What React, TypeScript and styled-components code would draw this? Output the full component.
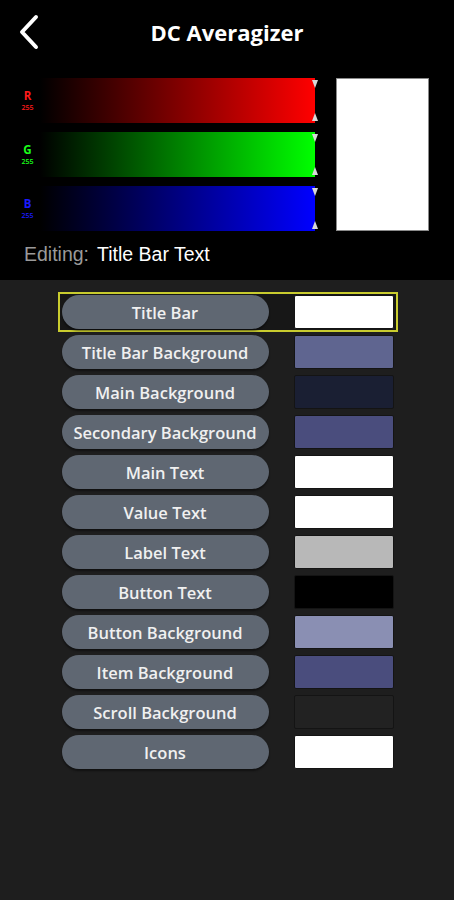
import React from 'react';
import styled, { createGlobalStyle } from 'styled-components';

const GlobalStyle = createGlobalStyle`
  html, body {
    margin: 0;
    padding: 0;
    background: #1e1e1e;
  }
  #root {
    min-height: 900px;
    background: #1e1e1e;
  }
`;

const Screen = styled.div`
  width: 454px;
  min-height: 900px;
  background: #1e1e1e;
  font-family: 'Open Sans', 'Noto Sans', sans-serif;
`;

const Header = styled.div`
  background: #000;
  padding-bottom: 14px;
`;

const TitleBar = styled.div`
  display: grid;
  grid-template-columns: 60px 1fr 60px;
  align-items: center;
  height: 64px;
`;

const BackButton = styled.button`
  display: flex;
  align-items: center;
  justify-content: center;
  width: 60px;
  height: 64px;
  padding: 0;
  border: none;
  background: none;
  cursor: pointer;
`;

const Title = styled.h1`
  margin: 0;
  text-align: center;
  color: #fff;
  font-size: 22px;
  font-weight: 700;
`;

const Editor = styled.div`
  display: flex;
  align-items: flex-start;
  padding: 14px 0 0 15px;
`;

const Sliders = styled.div`
  display: flex;
  flex-direction: column;
  gap: 9px;
`;

const SliderRow = styled.div`
  display: flex;
  align-items: center;
  height: 45px;
`;

const ChannelLabel = styled.div<{ $color: string }>`
  width: 25px;
  display: flex;
  flex-direction: column;
  align-items: center;
  color: ${p => p.$color};
  font-family: 'Open Sans', sans-serif;
`;

const ChannelLetter = styled.span`
  font-size: 11.5px;
  line-height: 15px;
  font-weight: 700;
`;

const ChannelValue = styled.span`
  font-size: 7px;
  line-height: 10px;
  font-weight: 600;
`;

const Track = styled.div<{ $color: string }>`
  position: relative;
  width: 275px;
  height: 45px;
  background: linear-gradient(to right, #000 0%, ${p => p.$color} 100%);
`;

const Thumb = styled.div<{ $down?: boolean }>`
  position: absolute;
  right: -3px;
  ${p => (p.$down ? 'top: 2px;' : 'bottom: 2px;')}
  width: 0;
  height: 0;
  border-left: 3px solid transparent;
  border-right: 3px solid transparent;
  ${p => (p.$down ? 'border-top: 8px solid #d8d8d8;' : 'border-bottom: 8px solid #d8d8d8;')}
`;

const Preview = styled.div<{ $color: string }>`
  margin-left: 21px;
  width: 91px;
  height: 151px;
  background: ${p => p.$color};
  border: 1px solid #8a8a8a;
`;

const EditingLine = styled.div`
  padding: 11px 0 0 24px;
  font-family: 'Liberation Sans', Arial, sans-serif;
  font-size: 19.5px;
  line-height: 24px;
  color: #9a9a9a;
`;

const EditingTarget = styled.span`
  color: #fff;
  margin-left: 8px;
`;

const List = styled.div`
  display: flex;
  flex-direction: column;
  align-items: center;
  padding: 12px 0 0 1px;
`;

const Row = styled.div<{ $selected?: boolean }>`
  display: flex;
  align-items: center;
  gap: 25px;
  width: 340px;
  box-sizing: border-box;
  padding: 1px 2px;
  border: 2px solid ${p => (p.$selected ? '#c9cc2e' : 'transparent')};
  background: ${p => (p.$selected ? '#171717' : 'transparent')};
`;

const Pill = styled.button`
  flex: none;
  width: 207px;
  height: 34px;
  border: none;
  border-radius: 17px;
  background: #5f6772;
  box-shadow: 0 2px 2px rgba(0, 0, 0, 0.45);
  color: #f0f0f0;
  font-family: 'Open Sans', sans-serif;
  font-size: 16.5px;
  font-weight: 600;
  padding: 0;
  cursor: pointer;
`;

const Swatch = styled.div<{ $color: string }>`
  flex: none;
  width: 100px;
  height: 34px;
  box-sizing: border-box;
  background: ${p => p.$color};
  border: 1px solid #141414;
  border-radius: 2px;
`;

const channels = [
  { letter: 'R', value: 255, label: '#ff1a1a', track: '#ff0000' },
  { letter: 'G', value: 255, label: '#1aff1a', track: '#00ff00' },
  { letter: 'B', value: 255, label: '#1a1aff', track: '#0000ff' },
];

const items = [
  { name: 'Title Bar', color: '#ffffff' },
  { name: 'Title Bar Background', color: '#5f6590' },
  { name: 'Main Background', color: '#1a1f33' },
  { name: 'Secondary Background', color: '#4a4d7d' },
  { name: 'Main Text', color: '#ffffff' },
  { name: 'Value Text', color: '#ffffff' },
  { name: 'Label Text', color: '#b8b8b8' },
  { name: 'Button Text', color: '#000000' },
  { name: 'Button Background', color: '#8a8fb3' },
  { name: 'Item Background', color: '#4a4d7d' },
  { name: 'Scroll Background', color: '#222222' },
  { name: 'Icons', color: '#ffffff' },
];

const App = () => {
  const selected = 0;

  return (
    <Screen>
      <GlobalStyle />
      <Header>
        <TitleBar>
          <BackButton aria-label="Back">
            <svg width="24" height="36" viewBox="0 0 24 36">
              <polyline
                points="18,3 4,18 18,33"
                fill="none"
                stroke="#fff"
                strokeWidth="4"
                strokeLinecap="round"
                strokeLinejoin="round"
              />
            </svg>
          </BackButton>
          <Title>DC Averagizer</Title>
          <div />
        </TitleBar>

        <Editor>
          <Sliders>
            {channels.map(c => (
              <SliderRow key={c.letter}>
                <ChannelLabel $color={c.label}>
                  <ChannelLetter>{c.letter}</ChannelLetter>
                  <ChannelValue>{c.value}</ChannelValue>
                </ChannelLabel>
                <Track $color={c.track}>
                  <Thumb $down />
                  <Thumb />
                </Track>
              </SliderRow>
            ))}
          </Sliders>
          <Preview $color="#ffffff" />
        </Editor>

        <EditingLine>
          Editing:<EditingTarget>Title Bar Text</EditingTarget>
        </EditingLine>
      </Header>

      <List>
        {items.map((item, i) => (
          <Row key={item.name} $selected={i === selected}>
            <Pill>{item.name}</Pill>
            <Swatch $color={item.color} />
          </Row>
        ))}
      </List>
    </Screen>
  );
};

export default App;
